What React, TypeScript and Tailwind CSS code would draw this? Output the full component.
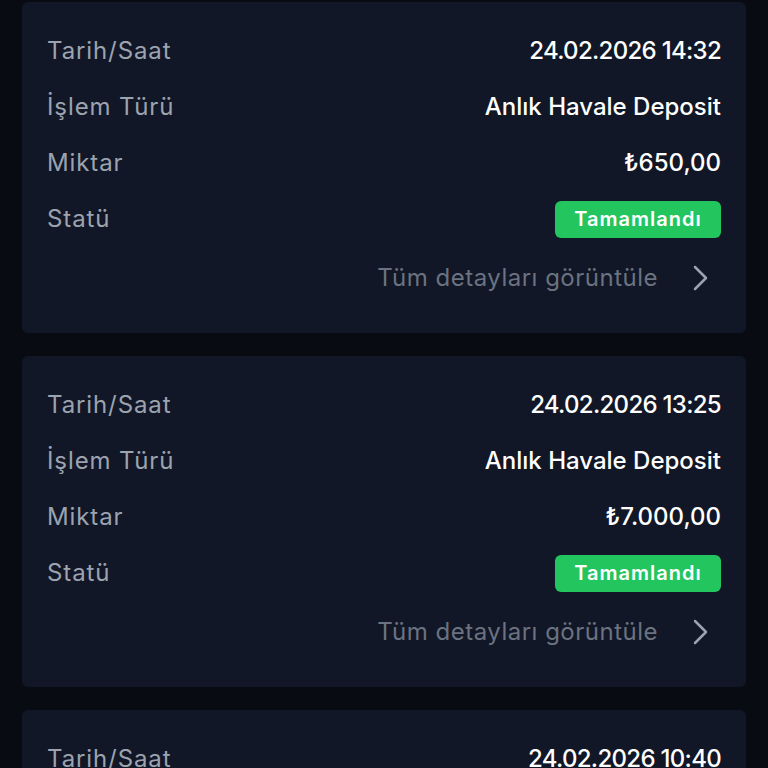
import React from 'react';

interface Transaction {
  date: string;
  type: string;
  amount: string;
  status: string;
}

const transactions: Transaction[] = [
  { date: '24.02.2026 14:32', type: 'Anlık Havale Deposit', amount: '₺650,00', status: 'Tamamlandı' },
  { date: '24.02.2026 13:25', type: 'Anlık Havale Deposit', amount: '₺7.000,00', status: 'Tamamlandı' },
  { date: '24.02.2026 10:40', type: 'Anlık Havale Deposit', amount: '₺1.000,00', status: 'Tamamlandı' },
];

function Row({ label, children }: { label: string; children: React.ReactNode }) {
  return (
    <div className="flex items-center justify-between h-8">
      <span className="text-[#9ca3af] text-[24px] tracking-[0.9px] leading-8">{label}</span>
      {children}
    </div>
  );
}

function TransactionCard({ tx }: { tx: Transaction }) {
  return (
    <div className="bg-[#111726] rounded-md px-[25px] pt-[33px] pb-[39px] flex flex-col gap-6">
      <Row label="Tarih/Saat">
        <span className="text-white text-[24px] font-medium tracking-[-0.7px] leading-8">{tx.date}</span>
      </Row>
      <Row label="İşlem Türü">
        <span className="text-white text-[24px] font-medium leading-8">{tx.type}</span>
      </Row>
      <Row label="Miktar">
        <span className="text-white text-[24px] font-medium leading-8">{tx.amount}</span>
      </Row>
      <Row label="Statü">
        <span className="bg-[#22c55e] text-white text-[20px] font-semibold tracking-[1px] rounded-md h-[37px] w-[166px] flex items-center justify-center">
          {tx.status}
        </span>
      </Row>
      <div className="flex items-center justify-end gap-[34px] h-8 mt-[3px] pr-[12px]">
        <span className="text-[#6b7280] text-[24px] tracking-[0.5px] leading-8">Tüm detayları görüntüle</span>
        <svg width="17" height="28" viewBox="0 0 17 28" fill="none" stroke="#9ca3af" strokeWidth="2.5" strokeLinecap="round" strokeLinejoin="round">
          <path d="M3 3l11 11-11 11" />
        </svg>
      </div>
    </div>
  );
}

export default function App() {
  return (
    <div
      className="bg-[#080b11] px-[22px] pt-[2px] flex flex-col gap-[23px] overflow-hidden h-[768px]"
      style={{ fontFamily: 'Inter, "Noto Sans", sans-serif' }}
    >
      {transactions.map((tx, i) => (
        <TransactionCard key={i} tx={tx} />
      ))}
    </div>
  );
}
